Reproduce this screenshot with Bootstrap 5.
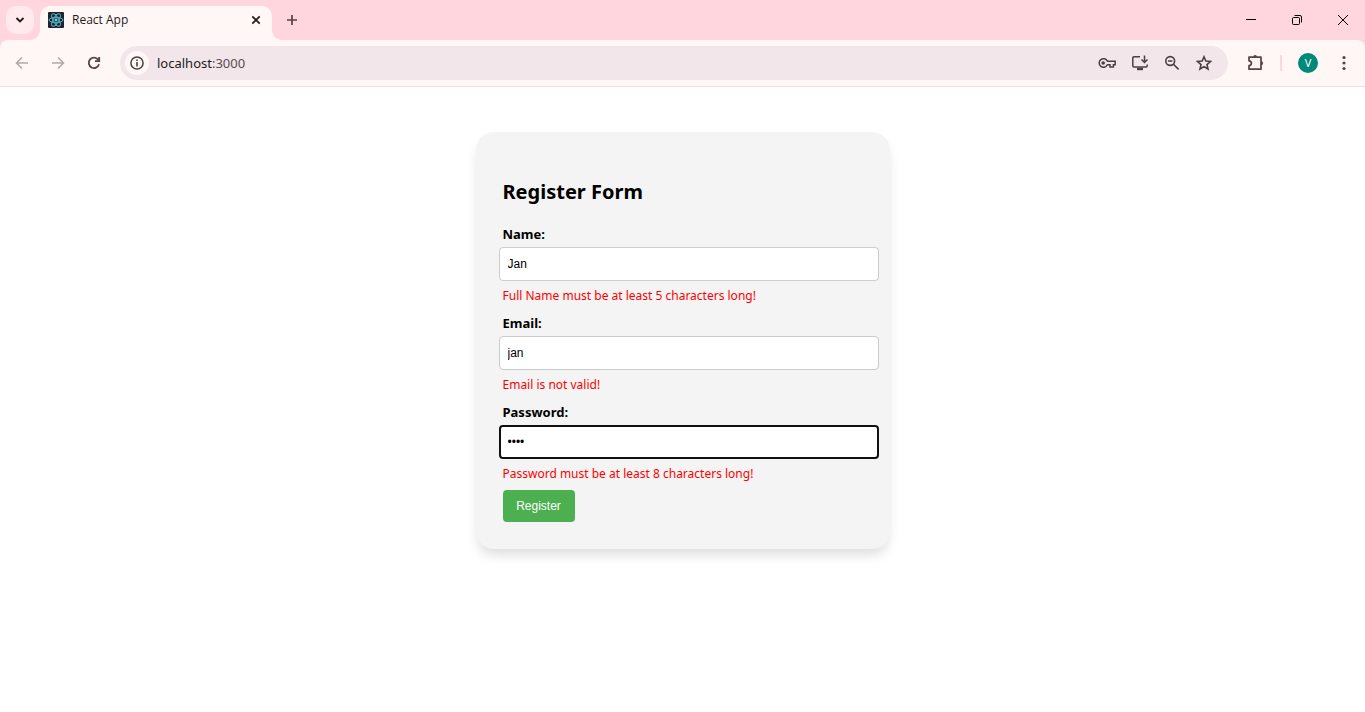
<!DOCTYPE html>
<html lang="en">
<head>
<meta charset="utf-8">
<meta name="viewport" content="width=device-width, initial-scale=1">
<title>React App</title>
<link href="https://cdn.jsdelivr.net/npm/bootstrap@5.3.0/dist/css/bootstrap.min.css" rel="stylesheet">
<style>
  body { font-family: "Noto Sans", "Open Sans", sans-serif; color: #000; background: #fff; }
  svg { display: block; flex: none; }
  .bare { border: 0; padding: 0; background: transparent; color: inherit; }
  .dimmed { color: #b3a9aa; }
  .tab-strip { height: 40px; background: #ffd6de; }
  .strip-btn { width: 28px; height: 28px; border-radius: 10px; background: #ffeaed; color: #1f1a1b; margin: 6px 6px 0; }
  .tab { width: 232px; height: 34px; margin-top: 6px; background: #fff7f6; border-radius: 10px 10px 0 0; position: relative; padding: 0 9px 6px 8px; font-family: "Open Sans", sans-serif; font-size: 12px; line-height: 16px; color: #1f1a1b; }
  .tab::before, .tab::after { content: ""; position: absolute; bottom: 0; width: 10px; height: 10px; }
  .tab::before { left: -10px; background: radial-gradient(circle at 0 0, transparent 10px, #fff7f6 10px); }
  .tab::after { right: -10px; background: radial-gradient(circle at 100% 0, transparent 10px, #fff7f6 10px); }
  .new-tab { margin: 12px 0 0 12px; width: 16px; height: 16px; color: #5b4146; }
  .win-btn { width: 46px; height: 40px; color: #000; }
  .toolbar-wrap { background: #ffd6de; }
  .toolbar { height: 47px; background: #fff7f6; border-radius: 8px 8px 0 0; border-bottom: 1px solid #f4dde0; color: #5b4146; padding: 0 15px 0 14px; }
  .nav-icons { width: 106px; gap: 20px; }
  .omnibox { height: 34px; border-radius: 17px; background: #f2e6ea; padding: 0 16px 0 5px; color: #4a3f43; }
  .site-info { width: 24px; height: 24px; border-radius: 50%; background: #fff7f6; }
  .address { font-size: 13px; line-height: 18px; color: #594b50; }
  .address span { color: #1f1a1b; }
  .divider { width: 2px; height: 16px; background: #ffd6de; margin: 0 16px 0 10px; }
  .avatar { width: 20px; height: 20px; border-radius: 50%; background: #00897b; color: #fff; font-size: 11px; line-height: 20px; }
  .register-card { width: 414px; max-width: 100%; margin: 45px auto; padding: 44px 11px 27px 23px; background: #f4f4f4; border-radius: 18px; box-shadow: 0 8px 12px -2px rgba(0,0,0,.13); }
  .register-card h2 { font-size: 20px; line-height: 32px; font-weight: 700; margin: 0 0 15px 4px; }
  .field-label { display: block; font-size: 13px; line-height: 22px; font-weight: 700; margin: 0 0 2px 4px; }
  .field-input.form-control { height: 34px; padding: 0 8px; border: 1px solid #ccc; border-radius: 4px; font: 12px/16px "Liberation Sans", sans-serif; color: #000; box-shadow: none; }
  .field-input.form-control.active { border: 2px solid #101010; padding: 0 7px; }
  .field-error { font-size: 12px; line-height: 18px; color: #f00; margin: 6px 0 7px 4px; }
  .register-btn.btn { display: block; width: 72px; height: 32px; padding: 0; margin-left: 4px; border: 0; border-radius: 4px; background: #4caf50; color: #fff; font: 12px/16px "Liberation Sans", sans-serif; }
</style>
</head>
<body>
<header>
  <div class="tab-strip d-flex align-items-start">
    <button class="bare strip-btn d-flex align-items-center justify-content-center" aria-label="Search tabs">
      <svg width="10" height="8" viewBox="0 0 10 8" fill="none" stroke="currentColor" stroke-width="1.8"><path d="M1.5 2l3.5 3.500L8.500 2"/></svg>
    </button>
    <div class="tab d-flex align-items-center">
      <svg width="16" height="16" viewBox="0 0 16 16"><rect width="16" height="16" rx="1" fill="#20232a"/><g fill="none" stroke="#58b5cc"><ellipse cx="8" cy="8" rx="7" ry="2.7"/><ellipse cx="8" cy="8" rx="7" ry="2.7" transform="rotate(60 8 8)"/><ellipse cx="8" cy="8" rx="7" ry="2.7" transform="rotate(120 8 8)"/></g><circle cx="8" cy="8" r="1.4" fill="#61dafb"/></svg>
      <span class="ms-2 flex-grow-1">React App</span>
      <button class="bare" aria-label="Close tab"><svg width="14" height="14" viewBox="0 0 14 14" stroke="currentColor" stroke-width="1.7"><path d="M3.3 3.3l7.4 7.4M10.7 3.3l-7.4 7.4"/></svg></button>
    </div>
    <button class="bare new-tab" aria-label="New tab"><svg width="16" height="16" viewBox="0 0 16 16" stroke="currentColor" stroke-width="1.7"><path d="M3 8h10M8 3v10"/></svg></button>
    <div class="d-flex ms-auto">
      <button class="bare win-btn d-flex align-items-center justify-content-center" aria-label="Minimize"><svg width="12" height="10" viewBox="-2 0 12 10" stroke="currentColor"><path d="M0 4.5h10"/></svg></button>
      <button class="bare win-btn d-flex align-items-center justify-content-center" aria-label="Restore"><svg width="12" height="10" viewBox="-2 0 12 10" fill="none" stroke="currentColor"><rect x=".5" y="2.5" width="7" height="7" rx="1"/><path d="M2.5.5H8Q9.5.5 9.5 2v5.5"/></svg></button>
      <button class="bare win-btn d-flex align-items-center justify-content-center" aria-label="Close"><svg width="12" height="10" viewBox="-2 0 12 10" stroke="currentColor"><path d="M0 0l10 10M10 0L0 10"/></svg></button>
    </div>
  </div>
  <div class="toolbar-wrap">
    <div class="toolbar d-flex align-items-center">
      <div class="nav-icons d-flex align-items-center">
        <button class="bare dimmed" aria-label="Back"><svg width="16" height="16" viewBox="0 0 16 16" fill="none" stroke="currentColor" stroke-width="1.6"><path d="M14 8H3M8 2.5L2.5 8 8 13.5"/></svg></button>
        <button class="bare dimmed" aria-label="Forward"><svg width="16" height="16" viewBox="0 0 16 16" fill="none" stroke="currentColor" stroke-width="1.6"><path d="M2 8h11M8 2.5L13.5 8 8 13.5"/></svg></button>
        <button class="bare" aria-label="Reload"><svg width="16" height="16" viewBox="0 0 16 16" fill="none" stroke="currentColor" stroke-width="1.8"><path d="M13 9.2A5.2 5.2 0 1 1 12.2 4.8M13.2 2v4.2H9"/></svg></button>
      </div>
      <div class="omnibox d-flex align-items-center flex-grow-1">
        <button class="bare site-info d-flex align-items-center justify-content-center" aria-label="Site information"><svg width="14" height="14" viewBox="0 0 14 14"><circle cx="7" cy="7" r="6.1" fill="none" stroke="currentColor" stroke-width="1.5"/><path d="M6.2 6h1.6v4.4H6.2zM6.2 3.4h1.6V5H6.2z" fill="currentColor"/></svg></button>
        <div class="address flex-grow-1 ms-2"><span>localhost</span>:3000</div>
        <div class="d-flex gap-3">
          <button class="bare" aria-label="Passwords"><svg width="18" height="16" viewBox="0 0 18 16" fill="none" stroke="currentColor" stroke-width="1.5"><path d="M9.4 6.2A4.3 4.3 0 1 0 9.4 9.8H12V12H15.4V9.8H17.2V6.2Z"/><circle cx="5.2" cy="8" r="1.8" fill="currentColor" stroke="none"/></svg></button>
          <button class="bare" aria-label="Install app"><svg width="16" height="16" viewBox="0 0 16 16" fill="none" stroke="currentColor" stroke-width="1.5"><path d="M8 1.7H2Q.8 1.7.8 2.9V10.8Q.8 12 2 12H14Q15.2 12 15.2 10.8V9.5M12.5.5V7M9.5 4.5l3 3 3-3"/><path d="M5 14h6" stroke-width="2.4"/></svg></button>
          <button class="bare" aria-label="Zoom"><svg width="16" height="16" viewBox="0 0 16 16" fill="none" stroke="currentColor" stroke-width="1.6"><circle cx="6.2" cy="6" r="4.4"/><path d="M4 6h4.4M9.4 9.2l5.2 5.2"/></svg></button>
          <button class="bare" aria-label="Bookmark"><svg width="16" height="16" viewBox="0 0 16 16" fill="none" stroke="currentColor" stroke-width="1.6"><path d="M8 1.8l1.85 4.3 4.6.4-3.5 3.05 1.05 4.5L8 11.65l-4 2.4 1.05-4.5L1.55 6.5l4.6-.4z"/></svg></button>
        </div>
      </div>
      <button class="bare ms-3 px-1" aria-label="Extensions"><svg width="18" height="18" viewBox="1 0 18 18" fill="none" stroke="currentColor" stroke-width="1.7"><path d="M2 3.2H14V15.2H2V11.6Q4.4 11.4 4.4 9.2T2 6.8Z" stroke-linejoin="round"/><path d="M6.2 3a1.9 1.9 0 0 1 3.8 0zM14.2 7.3a1.9 1.9 0 0 1 0 3.8z" fill="currentColor" stroke="none"/></svg></button>
      <div class="divider"></div>
      <button class="bare avatar text-center me-3" aria-label="Profile">V</button>
      <button class="bare ms-1" aria-label="Menu"><svg width="12" height="16" viewBox="0 0 12 16" fill="currentColor"><circle cx="6" cy="2.5" r="1.6"/><circle cx="6" cy="8" r="1.6"/><circle cx="6" cy="13.5" r="1.6"/></svg></button>
    </div>
  </div>
</header>
<main>
  <form class="register-card" novalidate>
    <h2>Register Form</h2>
    <label class="field-label" for="name">Name:</label>
    <input class="form-control field-input" id="name" type="text" value="Jan">
    <p class="field-error">Full Name must be at least 5 characters long!</p>
    <label class="field-label" for="email">Email:</label>
    <input class="form-control field-input" id="email" type="email" value="jan">
    <p class="field-error">Email is not valid!</p>
    <label class="field-label" for="password">Password:</label>
    <input class="form-control field-input active" id="password" type="password" value="1234">
    <p class="field-error">Password must be at least 8 characters long!</p>
    <button class="btn register-btn" type="button">Register</button>
  </form>
</main>
<script src="https://cdn.jsdelivr.net/npm/bootstrap@5.3.0/dist/js/bootstrap.bundle.min.js"></script>
</body>
</html>
